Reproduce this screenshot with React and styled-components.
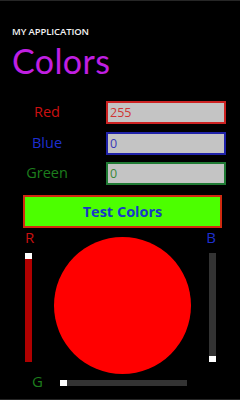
import React from "react";
import styled, { createGlobalStyle } from "styled-components";

const Global = createGlobalStyle`
  html, body { margin: 0; padding: 0; background: #000; }
  body { font-family: "Open Sans", "Noto Sans", sans-serif; }
`;

const Screen = styled.div`
  width: 240px;
  height: 400px;
  box-sizing: border-box;
  background: #000;
  border-top: 1px solid #262626;
  border-bottom: 1px solid #262626;
  overflow: hidden;
  display: flex;
  flex-direction: column;
`;

const Header = styled.header`
  padding: 25px 0 0 12px;
  display: flex;
  flex-direction: column;
`;

const AppName = styled.div`
  color: #f2f2f2;
  font-size: 9.5px;
  line-height: 12px;
  font-weight: 600;
  letter-spacing: -0.1px;
`;

const Title = styled.h1`
  margin: 2px 0 0;
  color: #c01fe2;
  font-family: Lato, "Open Sans", sans-serif;
  font-size: 34px;
  font-weight: 400;
  line-height: 41px;
  letter-spacing: 0.4px;
`;

const Form = styled.div`
  margin-top: 20px;
  display: grid;
  grid-template-columns: 106px 120px;
  grid-auto-rows: 23px;
  row-gap: 7.5px;
`;

const Label = styled.label`
  justify-self: center;
  margin-right: 12px;
  padding-top: 2px;
  font-size: 14.5px;
  line-height: 18px;
  color: ${(p) => p.$color};
`;

const Field = styled.div`
  box-sizing: border-box;
  height: 23px;
  background: #c4c4c4;
  border: 2px solid ${(p) => p.$border};
  color: ${(p) => p.$color};
  font-size: 12.5px;
  line-height: 19px;
  padding-left: 2px;
`;

const Button = styled.button`
  margin: 10px 0 0 23px;
  width: 199px;
  height: 33px;
  box-sizing: border-box;
  background: #4cff00;
  border: 2px solid #d02a10;
  color: #1838c8;
  font-family: inherit;
  font-size: 14.5px;
  font-weight: 700;
  padding: 0;
`;

const Playground = styled.div`
  padding-left: 25px;
  width: 191px;
  display: grid;
  grid-template-columns: 8px 1fr 8px;
`;

const Side = styled.div`
  display: flex;
  flex-direction: column;
  align-items: ${(p) => (p.$right ? "flex-end" : "flex-start")};
`;

const Letter = styled.span`
  font-size: 15px;
  line-height: 18px;
  color: ${(p) => p.$color};
`;

const VTrack = styled.div`
  margin-top: 7px;
  width: 7px;
  height: 109px;
  background: ${(p) => p.$fill};
  display: flex;
  flex-direction: column;
  justify-content: ${(p) => (p.$thumbEnd ? "flex-end" : "flex-start")};
`;

const Thumb = styled.div`
  width: 7px;
  height: 6px;
  background: #fff;
`;

const Circle = styled.div`
  justify-self: center;
  margin: 9px 0 0 4px;
  width: 137px;
  height: 137px;
  border-radius: 50%;
  background: #ff0000;
`;

const GRow = styled.div`
  margin-top: -2px;
  padding-left: 32px;
  display: flex;
  align-items: center;
`;

const HTrack = styled.div`
  margin-left: 17px;
  margin-top: 3px;
  width: 127px;
  height: 6px;
  background: #333;
  display: flex;
`;

const colors = [
  { name: "Red", value: "255", label: "#cc1010", border: "#cc2222", text: "#d03434" },
  { name: "Blue", value: "0", label: "#1e2fd0", border: "#1f22a8", text: "#3a3ab8" },
  { name: "Green", value: "0", label: "#1d7d1d", border: "#1f7a34", text: "#3a883a" },
];

export default function App() {
  return (
    <Screen>
      <Global />
      <Header>
        <AppName>MY APPLICATION</AppName>
        <Title>Colors</Title>
      </Header>
      <Form>
        {colors.map((c) => (
          <React.Fragment key={c.name}>
            <Label $color={c.label}>{c.name}</Label>
            <Field $border={c.border} $color={c.text}>{c.value}</Field>
          </React.Fragment>
        ))}
      </Form>
      <Button>Test Colors</Button>
      <Playground>
        <Side>
          <Letter $color="#c81010">R</Letter>
          <VTrack $fill="#b00000">
            <Thumb />
          </VTrack>
        </Side>
        <Circle />
        <Side $right>
          <Letter $color="#1e2fd0">B</Letter>
          <VTrack $fill="#333" $thumbEnd>
            <Thumb />
          </VTrack>
        </Side>
      </Playground>
      <GRow>
        <Letter $color="#1d7d1d">G</Letter>
        <HTrack>
          <Thumb />
        </HTrack>
      </GRow>
    </Screen>
  );
}
